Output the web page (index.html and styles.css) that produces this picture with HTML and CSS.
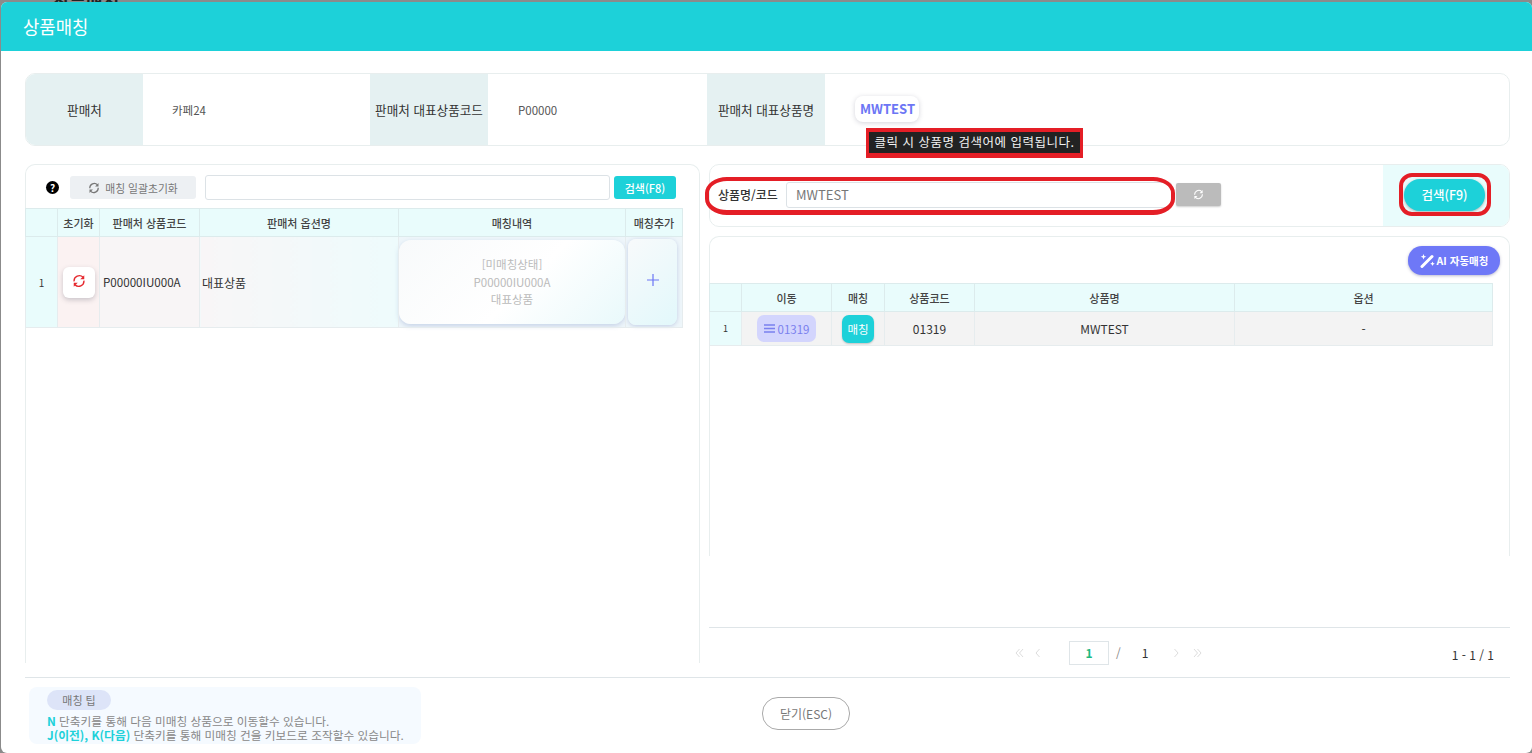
FILE: index.html
```html
<!DOCTYPE html>
<html lang="ko">

<head>
  <meta charset="UTF-8">
  <title>상품매칭</title>
  <link rel="stylesheet" href="styles.css">
</head>

<body>
  <svg class="iconDefs" width="0" height="0">
    <defs>
      <g id="syncIcon">
        <path d="M3 10.5A7.5 7.5 0 0 1 15.8 4.7" fill="none" stroke="currentColor" stroke-width="2" />
        <path d="M17.5 1.8v5.7h-5.7z" fill="currentColor" />
        <path d="M17 9.5A7.5 7.5 0 0 1 4.2 15.3" fill="none" stroke="currentColor" stroke-width="2" />
        <path d="M2.5 18.2v-5.7h5.7z" fill="currentColor" />
      </g>
    </defs>
  </svg>

  <div class="behind">상품매칭</div>

  <div class="modal">
    <div class="modalHead">상품매칭</div>

    <div class="modalBody">
      <!-- Seller info -->
      <div class="infoCard">
        <div class="infoLabel">판매처</div>
        <div class="infoValue infoValueSeller">카페24</div>
        <div class="infoLabel">판매처 대표상품코드</div>
        <div class="infoValue infoValueCode">P00000</div>
        <div class="infoLabel">판매처 대표상품명</div>
        <div class="infoValue"><span class="nameChip">MWTEST</span></div>
      </div>

      <div class="columns">
        <!-- Left: seller options -->
        <div class="leftPanel">
          <div class="leftTools">
            <span class="helpDot">?</span>
            <button class="resetAllBtn">
              <svg class="syncSmall" viewBox="0 0 20 20"><use href="#syncIcon" /></svg>
              매칭 일괄초기화
            </button>
            <input class="leftInput" type="text">
            <button class="leftSearchBtn">검색(F8)</button>
          </div>
          <table class="grid leftGrid">
            <colgroup>
              <col class="colNo">
              <col class="colInit">
              <col class="colSellerCode">
              <col class="colOption">
              <col class="colMatch">
              <col class="colAdd">
            </colgroup>
            <thead>
              <tr>
                <th></th>
                <th>초기화</th>
                <th>판매처 상품코드</th>
                <th>판매처 옵션명</th>
                <th>매칭내역</th>
                <th>매칭추가</th>
              </tr>
            </thead>
            <tbody>
              <tr>
                <td class="noCell">1</td>
                <td class="initCell">
                  <button class="initBtn"><svg class="syncRed" viewBox="0 0 20 20"><use href="#syncIcon" /></svg></button>
                </td>
                <td class="codeCell">P00000IU000A</td>
                <td class="optionCell">대표상품</td>
                <td class="matchCell">
                  <div class="matchBox">
                    <span>[미매칭상태]</span>
                    <span>P00000IU000A</span>
                    <span>대표상품</span>
                  </div>
                </td>
                <td class="addCell">
                  <button class="addBtn">
                    <svg width="14" height="14" viewBox="0 0 14 14"><path d="M7 1v12M1 7h12" stroke="#6c76f5" stroke-width="1.2" /></svg>
                  </button>
                </td>
              </tr>
            </tbody>
          </table>
        </div>

        <!-- Right: product search -->
        <div class="rightPanel">
          <div class="searchCard">
            <div class="searchMain">
              <label class="searchLabel">상품명/코드</label>
              <input class="searchInput" type="text" value="MWTEST">
              <button class="searchReset"><svg class="syncWhite" viewBox="0 0 20 20"><use href="#syncIcon" /></svg></button>
            </div>
            <div class="searchSide">
              <button class="searchBtn">검색(F9)</button>
            </div>
          </div>

          <div class="resultCard">
            <div class="resultTools">
              <button class="aiBtn">
                <svg width="15" height="15" viewBox="0 0 15 15">
                  <path d="M2 13.5 12 3.5" stroke="#fff" stroke-width="3" stroke-linecap="round" />
                  <path d="M3.500 1l.8 2 2 .8-2 .8-.8 2-.8-2-2-.8 2-.8zM12.500 8.500l.7 1.600 1.600.7-1.600.7-.7 1.600-.7-1.600-1.600-.7 1.600-.7z" fill="#fff" />
                </svg>
                AI 자동매칭
              </button>
            </div>
            <table class="grid rightGrid">
              <colgroup>
                <col class="colNo">
                <col class="colMove">
                <col class="colPick">
                <col class="colProdCode">
                <col class="colProdName">
                <col>
              </colgroup>
              <thead>
                <tr>
                  <th></th>
                  <th>이동</th>
                  <th>매칭</th>
                  <th>상품코드</th>
                  <th>상품명</th>
                  <th>옵션</th>
                </tr>
              </thead>
              <tbody>
                <tr>
                  <td class="noCell noCellSmall">1</td>
                  <td class="grayCell">
                    <span class="moveBtn">
                      <svg width="11" height="9" viewBox="0 0 11 9"><path d="M0 1h11M0 4.500h11M0 8h11" stroke="#7a80ee" stroke-width="1.300" /></svg>
                      01319
                    </span>
                  </td>
                  <td class="pickCell"><button class="pickBtn">매칭</button></td>
                  <td class="grayCell">01319</td>
                  <td class="grayCell">MWTEST</td>
                  <td class="grayCell">-</td>
                </tr>
              </tbody>
            </table>
          </div>

          <div class="pager">
            <div class="pagerNav">
              <svg class="pagerArrow" width="9" height="10" viewBox="0 0 9 10"><path d="M4.500 1 1 5l3.500 4M8 1 4.500 5 8 9" /></svg>
              <svg class="pagerArrow arrowGap" width="6" height="10" viewBox="0 0 6 10"><path d="M4.500 1 1 5l3.500 4" /></svg>
              <span class="pageBox">1</span>
              <span class="pageSlash">/</span>
              <span class="pageTotal">1</span>
              <svg class="pagerArrow nextGap" width="6" height="10" viewBox="0 0 6 10"><path d="M1.500 1 5 5 1.500 9" /></svg>
              <svg class="pagerArrow lastGap" width="9" height="10" viewBox="0 0 9 10"><path d="M1 1l3.500 4L1 9M4.500 1 8 5 4.500 9" /></svg>
            </div>
            <div class="pagerCount">1 - 1 / 1</div>
          </div>
        </div>
      </div>

      <!-- Footer -->
      <div class="modalFoot">
        <div class="tipBox">
          <span class="tipPill">매칭 팁</span>
          <p><b>N</b> 단축키를 통해 다음 미매칭 상품으로 이동할수 있습니다.</p>
          <p><b>J(이전), K(다음)</b> 단축키를 통해 미매칭 건을 키보드로 조작할수 있습니다.</p>
        </div>
        <button class="closeBtn">닫기(ESC)</button>
      </div>
    </div>

    <!-- Red review marks drawn on top of the page -->
    <div class="tooltipMark">클릭 시 상품명 검색어에 입력됩니다.</div>
    <div class="ringMark ringInput"></div>
    <div class="ringMark ringButton"></div>
  </div>
</body>

</html>
```

FILE: styles.css
```css
/* Base styles */
* {
  box-sizing: border-box;
}

html,
body {
  height: 100%;
}

body {
  margin: 0;
  padding-left: 1px;
  overflow: hidden;
  background-color: #8b8b8b;
  font-family: "Noto Sans CJK KR", "Noto Sans", sans-serif;
  font-size: 12px;
  color: #333;
}

button {
  font-family: inherit;
  border: none;
  cursor: pointer;
  padding: 0;
}

input {
  font-family: inherit;
}

.iconDefs {
  position: absolute;
}

.behind {
  height: 2px;
  padding-left: 52px;
  overflow: hidden;
  font-size: 18px;
  font-weight: 700;
  line-height: 4px;
  color: #222;
}

/* Modal frame */
.modal {
  position: relative;
  height: 751px;
  display: flex;
  flex-direction: column;
  background-color: #fff;
  border-radius: 6px;
  overflow: hidden;
}

.modalHead {
  flex: none;
  height: 49px;
  padding-left: 22px;
  background-color: #1dd1d9;
  color: #fff;
  font-size: 17.8px;
  line-height: 49px;
}

.modalBody {
  flex: 1;
  display: flex;
  flex-direction: column;
  padding: 22px 22px 0 24px;
}

/* Seller info */
.infoCard {
  flex: none;
  height: 73px;
  display: grid;
  grid-template-columns: 117px 227px 118px 219px 118px 1fr;
  border: 1px solid #e8eeee;
  border-radius: 10px;
  overflow: hidden;
  align-items: stretch;
}

.infoLabel {
  display: flex;
  align-items: center;
  justify-content: center;
  background-color: #e5f1f2;
  white-space: nowrap;
  font-size: 12.6px;
}

.infoValue {
  display: flex;
  align-items: center;
  padding-left: 30px;
  font-size: 11.5px;
  color: #555;
}

.infoValueSeller {
  padding-left: 29px;
}

.nameChip {
  height: 26px;
  padding: 0 4px 0 5px;
  margin-bottom: 1px;
  border-radius: 8px;
  background-color: #fff;
  box-shadow: 0 1px 5px rgba(60, 60, 90, 0.22);
  color: #6c76f5;
  font-size: 13px;
  font-weight: 700;
  line-height: 25px;
}

.columns {
  flex: none;
  height: 513px;
  margin-top: 18px;
  display: flex;
  gap: 9px;
}

/* Left panel */
.leftPanel {
  flex: none;
  width: 675px;
  height: 499px;
  border: 1px solid #e8eeee;
  border-bottom: none;
  border-radius: 10px 10px 0 0;
}

.leftTools {
  height: 43px;
  display: flex;
  align-items: center;
  padding: 2px 6px 0 20px;
}

.helpDot {
  width: 13px;
  height: 13px;
  margin-right: 11px;
  border-radius: 50%;
  background-color: #000;
  color: #fff;
  font-size: 10px;
  font-weight: 700;
  line-height: 13px;
  text-align: center;
}

.resetAllBtn {
  width: 126px;
  height: 23px;
  margin-right: 9px;
  display: flex;
  align-items: center;
  justify-content: center;
  gap: 5px;
  border-radius: 3px;
  background-color: #edf0f3;
  color: #777;
  font-size: 10.8px;
}

.syncSmall {
  width: 12px;
  height: 12px;
  color: #777;
}

.leftInput {
  width: 405px;
  height: 25px;
  margin-right: 4px;
  border: 1px solid #dce2e6;
  border-radius: 3px;
}

.leftSearchBtn {
  width: 62px;
  height: 23px;
  border-radius: 3px;
  background-color: #1dd1d9;
  color: #fff;
  font-size: 11px;
  font-weight: 500;
}

/* Tables */
.grid {
  border-collapse: collapse;
  table-layout: fixed;
  color: #333;
  margin-left: -1px;
}

.grid th {
  height: 28px;
  padding: 0;
  border: 1px solid #dcebec;
  background-color: #e9fcfc;
  font-size: 11px;
  font-weight: 500;
  color: #444;
  text-align: center;
}

.grid td {
  padding: 0;
  border: 1px solid #e6ecee;
  text-align: center;
  font-size: 12px;
}

.leftGrid {
  width: 658px;
}

.colNo {
  width: 32px;
}

.colInit {
  width: 42px;
}

.colSellerCode {
  width: 100px;
}

.colOption {
  width: 199px;
}

.colMatch {
  width: 227px;
}

.colMove {
  width: 90px;
}

.colPick {
  width: 53px;
}

.colProdCode {
  width: 90px;
}

.colProdName {
  width: 260px;
}

.leftGrid td {
  height: 91px;
}

.grid .noCell {
  background-color: #e9fcfc;
  font-size: 10px;
  color: #333;
}

.grid .noCellSmall {
  font-size: 9px;
}

.initCell {
  background-color: #fbf2f2;
}

.initBtn {
  width: 32px;
  height: 31px;
  display: block;
  margin: 0 auto;
  border-radius: 6px;
  background-color: #fff;
  box-shadow: 0 2px 5px rgba(60, 60, 80, 0.25);
}

.syncRed {
  width: 14px;
  height: 14px;
  color: #e5282e;
  display: block;
  margin: 0 auto 2px;
}

.grid .codeCell {
  padding-left: 3px;
  background-color: #f8f5f6;
  font-size: 11.6px;
  text-align: left;
  white-space: nowrap;
}

.grid .optionCell {
  padding-left: 2px;
  background: linear-gradient(90deg, #f8f6f7, #eefbfc);
  text-align: left;
}

.grid .matchCell {
  background-color: #eef6fa;
  border-right-color: #e6ecee;
}

.matchBox {
  width: 226px;
  height: 84px;
  margin: 0 auto 1px;
  padding-top: 2px;
  display: flex;
  flex-direction: column;
  justify-content: center;
  gap: 0;
  border-radius: 12px;
  background: linear-gradient(135deg, #f8fafb, #fff 55%, #e9f9fb);
  box-shadow: 0 2px 5px rgba(110, 130, 190, 0.3);
  color: #bbb;
  font-size: 11.5px;
  line-height: 17.5px;
}

.addCell {
  background-color: #eef6fa;
}

.addBtn {
  width: 49px;
  height: 86px;
  display: flex;
  align-items: center;
  justify-content: center;
  margin: 0 auto 1px 2px;
  padding-bottom: 4px;
  border-radius: 8px;
  background: linear-gradient(135deg, #f8fafb, #e2f8fb);
  box-shadow: 0 1px 4px rgba(110, 130, 190, 0.35);
}

/* Right panel */
.rightPanel {
  flex: 1;
  display: flex;
  flex-direction: column;
}

.searchCard {
  flex: none;
  height: 63px;
  display: flex;
  border: 1px solid #e8eeee;
  border-radius: 10px;
  overflow: hidden;
}

.searchMain {
  flex: 1;
  display: flex;
  align-items: center;
  padding: 0 0 2px 8px;
}

.searchLabel {
  width: 68px;
  font-size: 12px;
  font-weight: 500;
  white-space: nowrap;
}

.searchInput {
  width: 386px;
  height: 26px;
  padding-left: 9px;
  border: 1px solid #dce2e6;
  border-radius: 3px;
  font-size: 13px;
  color: #777;
}

.searchReset {
  width: 45px;
  height: 23px;
  margin-left: 4px;
  border-radius: 2px;
  background-color: #bbb;
  box-shadow: 0 1px 2px rgba(0, 0, 0, 0.2);
}

.syncWhite {
  width: 11px;
  height: 11px;
  color: #fff;
}

.searchSide {
  flex: none;
  width: 126px;
  display: flex;
  align-items: center;
  justify-content: center;
  padding-right: 3px;
  padding-bottom: 2px;
  background-color: #e9fcfc;
}

.searchBtn {
  width: 81px;
  height: 32px;
  border-radius: 16px;
  background-color: #1dd1d9;
  box-shadow: 0 1px 3px rgba(0, 0, 0, 0.3);
  color: #fff;
  font-size: 12.5px;
  font-weight: 500;
}

.resultCard {
  flex: none;
  height: 320px;
  margin-top: 9px;
  border: 1px solid #e8eeee;
  border-bottom: none;
  border-radius: 10px 10px 0 0;
}

.resultTools {
  height: 46px;
  display: flex;
  justify-content: flex-end;
  padding: 9px 9px 0 0;
}

.aiBtn {
  width: 92px;
  height: 29px;
  display: flex;
  align-items: center;
  justify-content: center;
  gap: 2px;
  border-radius: 14px;
  background-color: #6e78f7;
  box-shadow: 0 1px 3px rgba(60, 60, 120, 0.35);
  color: #fff;
  font-size: 10.5px;
  font-weight: 700;
}

.rightGrid {
  width: 784px;
}

.rightGrid th {
  height: 28px;
}

.rightGrid td {
  height: 34px;
}

.grayCell {
  background-color: #f3f3f3;
}

.moveBtn {
  width: 59px;
  height: 27px;
  margin: 0 auto;
  display: flex;
  align-items: center;
  justify-content: center;
  gap: 3px;
  border-radius: 7px;
  background-color: #d3d5fd;
  color: #7a80ee;
  font-size: 11.5px;
}

.pickCell {
  background-color: #f3f3f3;
}

.pickBtn {
  width: 32px;
  height: 28px;
  display: block;
  margin: 0 auto;
  border-radius: 7px;
  background-color: #1dd1d9;
  box-shadow: 0 1px 2px rgba(0, 0, 0, 0.2);
  color: #fff;
  font-size: 11.5px;
}

/* Pager */
.pager {
  flex: none;
  height: 50px;
  margin-top: 71px;
  display: flex;
  align-items: center;
  border-top: 1px solid #dfe5e8;
  position: relative;
}

.pagerNav {
  display: flex;
  align-items: center;
  margin-left: 306px;
}

.pagerArrow {
  fill: none;
  stroke: #ddd;
  stroke-width: 1;
}

.arrowGap {
  margin-left: 11px;
}

.nextGap {
  margin-left: 25px;
}

.lastGap {
  margin-left: 14px;
}

.pageBox {
  width: 40px;
  height: 24px;
  margin-left: 28px;
  border: 1px solid #dfe5e8;
  color: #1eb980;
  font-size: 12px;
  font-weight: 700;
  line-height: 22px;
  text-align: center;
}

.pageSlash {
  margin-left: 7px;
  color: #888;
}

.pageTotal {
  margin-left: 21px;
  font-size: 12px;
}

.pagerCount {
  margin-left: auto;
  margin-right: 16px;
  padding-top: 4px;
  font-size: 12px;
}

/* Footer */
.modalFoot {
  flex: 1;
  position: relative;
  display: flex;
  align-items: flex-start;
  padding: 9px 0 0 4px;
  border-top: 1px solid #dfe5e8;
}

.tipBox {
  width: 392px;
  height: 57px;
  padding: 3px 0 0 18px;
  border-radius: 8px;
  background-color: #f5faff;
  color: #888;
  font-size: 11.7px;
  line-height: 14px;
}

.tipBox p {
  margin: 0;
  height: 14px;
  white-space: nowrap;
}

.tipBox b {
  color: #1dd1d9;
  font-weight: 700;
  font-size: 11.8px;
}

.tipPill {
  display: block;
  width: 64px;
  height: 20px;
  margin-bottom: 4px;
  border-radius: 10px;
  background-color: #dde4f8;
  color: #777;
  font-size: 11px;
  line-height: 20px;
  text-align: center;
}

.closeBtn {
  width: 88px;
  height: 33px;
  margin: 10px 0 0 341px;
  border: 1px solid #aaa;
  border-radius: 16px;
  background-color: #fff;
  color: #777;
  font-size: 12px;
}

/* Review marks */
.tooltipMark {
  position: absolute;
  left: 865px;
  top: 126px;
  width: 217px;
  height: 30px;
  border: 3px solid #e41e26;
  border-width: 4px 3px 5px 3px;
  background-color: #222;
  color: #f2f2f2;
  font-size: 12.5px;
  letter-spacing: 0.5px;
  line-height: 20px;
  text-align: center;
  white-space: nowrap;
}

.ringMark {
  position: absolute;
  border: 4px solid #e41e26;
  pointer-events: none;
}

.ringInput {
  left: 704px;
  top: 175px;
  width: 470px;
  height: 38px;
  border-width: 4px 4px 5px 4px;
  border-radius: 22px / 16px;
}

.ringButton {
  left: 1398px;
  top: 171px;
  width: 92px;
  height: 43px;
  border-radius: 13px;
}
```
